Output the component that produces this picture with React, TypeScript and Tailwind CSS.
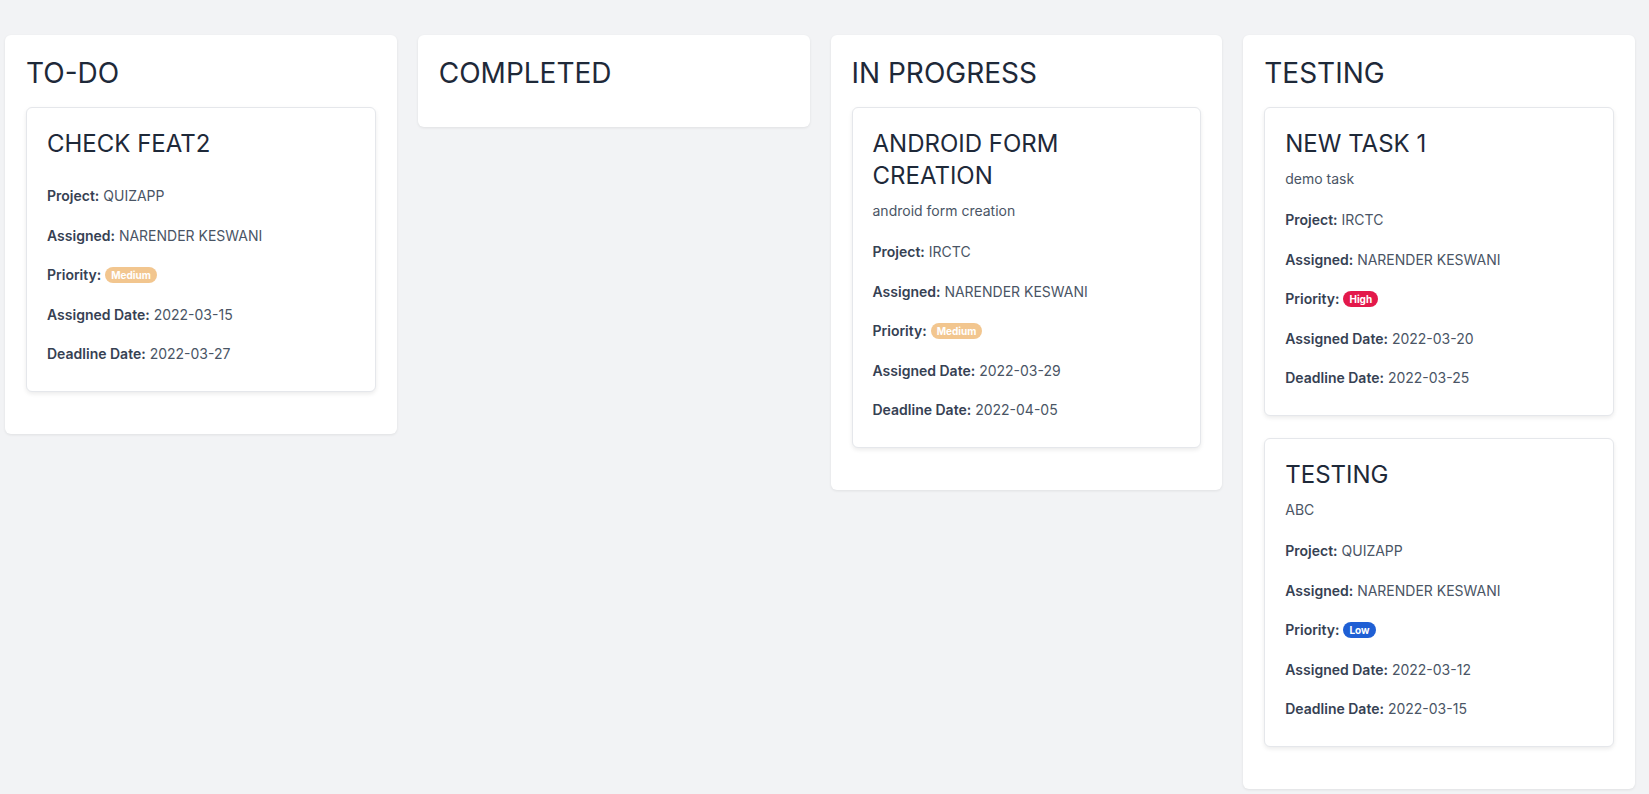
import React from "react";

type Task = {
  title: string;
  desc?: string;
  project: string;
  assigned: string;
  priority: "High" | "Medium" | "Low";
  assignedDate: string;
  deadline: string;
};

const columns: { name: string; tasks: Task[] }[] = [
  {
    name: "TO-DO",
    tasks: [
      { title: "CHECK FEAT2", project: "QUIZAPP", assigned: "NARENDER KESWANI", priority: "Medium", assignedDate: "2022-03-15", deadline: "2022-03-27" },
    ],
  },
  { name: "COMPLETED", tasks: [] },
  {
    name: "IN PROGRESS",
    tasks: [
      { title: "ANDROID FORM CREATION", desc: "android form creation", project: "IRCTC", assigned: "NARENDER KESWANI", priority: "Medium", assignedDate: "2022-03-29", deadline: "2022-04-05" },
    ],
  },
  {
    name: "TESTING",
    tasks: [
      { title: "NEW TASK 1", desc: "demo task", project: "IRCTC", assigned: "NARENDER KESWANI", priority: "High", assignedDate: "2022-03-20", deadline: "2022-03-25" },
      { title: "TESTING", desc: "ABC", project: "QUIZAPP", assigned: "NARENDER KESWANI", priority: "Low", assignedDate: "2022-03-12", deadline: "2022-03-15" },
    ],
  },
];

function Badge({ level }: { level: Task["priority"] }) {
  const color = level === "High" ? "bg-[#e3194b]" : level === "Low" ? "bg-[#1f5fd4]" : "bg-[#f2c68f]";
  return (
    <span className={`inline-block ${color} text-white text-[10px] font-bold leading-none px-[6px] py-[3px] rounded-full align-[1px]`}>
      {level}
    </span>
  );
}

function Row({ label, children }: { label: string; children: React.ReactNode }) {
  return (
    <p className="text-[14px] leading-[21px] text-gray-600">
      <span className="font-semibold text-gray-700">{label}:</span> {children}
    </p>
  );
}

function TaskCard({ task }: { task: Task }) {
  return (
    <div className="bg-white border border-gray-200 rounded-md shadow-[0_2px_4px_rgba(0,0,0,0.08)] px-5 pt-5 pb-[27px] mb-[22px]">
      <h4 className="text-[24px] leading-[32px] text-gray-800 mb-2">{task.title}</h4>
      {task.desc ? (
        <p className="text-[14px] leading-[21px] text-gray-600 mb-5">{task.desc}</p>
      ) : (
        <div className="h-0 mb-[25px]"></div>
      )}
      <div className="flex flex-col gap-[18.5px]">
        <Row label="Project">{task.project}</Row>
        <Row label="Assigned">{task.assigned}</Row>
        <Row label="Priority"><Badge level={task.priority} /></Row>
        <Row label="Assigned Date">{task.assignedDate}</Row>
        <Row label="Deadline Date">{task.deadline}</Row>
      </div>
    </div>
  );
}

export default function App() {
  return (
    <div className="min-h-screen bg-[#f2f3f5] pl-[5px] pr-[14px] pt-[35px] pb-4 font-['Inter',sans-serif]">
      <div className="flex items-start gap-[21px]">
        {columns.map((col) => (
          <div key={col.name} className="flex-1 bg-white rounded-md shadow-[0_1px_3px_rgba(0,0,0,0.08)] p-[21px] pb-0 flex flex-col">
            <h3 className="text-[28px] leading-[34px] text-gray-800 mb-[17px]">{col.name}</h3>
            {col.tasks.map((t) => (
              <TaskCard key={t.title} task={t} />
            ))}
            <div className={col.tasks.length ? "h-[21px] -mt-[1px]" : "h-[20px]"}></div>
          </div>
        ))}
      </div>
    </div>
  );
}
